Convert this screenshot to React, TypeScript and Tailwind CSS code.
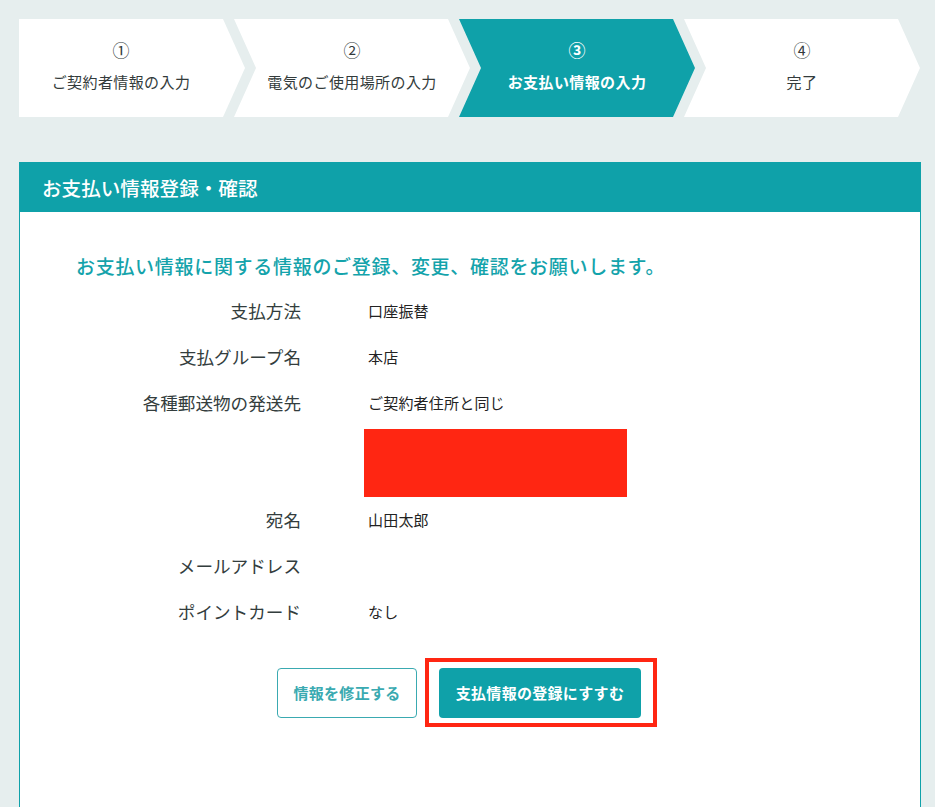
import React from "react";

const steps = [
  { num: "①", label: "ご契約者情報の入力" },
  { num: "②", label: "電気のご使用場所の入力" },
  { num: "③", label: "お支払い情報の入力", active: true },
  { num: "④", label: "完了" },
];

const rows = [
  { label: "支払方法", value: "口座振替" },
  { label: "支払グループ名", value: "本店" },
  { label: "各種郵送物の発送先", value: "ご契約者住所と同じ", redacted: true },
  { label: "宛名", value: "山田太郎" },
  { label: "メールアドレス", value: "" },
  { label: "ポイントカード", value: "なし" },
];

function StepBar() {
  return (
    <div className="flex h-[98px]">
      {steps.map((s, i) => (
        <div
          key={s.num}
          className={
            (i === 0
              ? "w-[226px] pr-[22px] [clip-path:polygon(0_0,calc(100%-22px)_0,100%_50%,calc(100%-22px)_100%,0_100%)]"
              : "-ml-[11px] w-[236px] px-[22px] [clip-path:polygon(0_0,calc(100%-22px)_0,100%_50%,calc(100%-22px)_100%,0_100%,22px_50%)]") +
            (s.active ? " bg-[#0fa1a9] text-white font-bold" : " bg-white text-[#333b3b]") +
            " flex flex-col items-center justify-center pb-[6px]"
          }
        >
          <span className="text-[17px] leading-[24px]">{s.num}</span>
          <span className="mt-[9px] text-[15px] leading-[22px] tracking-[0.4px]">{s.label}</span>
        </div>
      ))}
    </div>
  );
}

export default function App() {
  return (
    <div
      className="min-h-[807px] bg-[#e6eeee] pl-[19px] pr-[14px] pt-[19px]"
      style={{ fontFamily: '"Noto Sans CJK JP", "Noto Sans", sans-serif' }}
    >
      <StepBar />

      {/* panel */}
      <div className="mt-[45px] border border-[#0fa1a9]">
        <div className="flex h-[49px] items-center bg-[#0fa1a9] pl-[22px] text-[19.6px] font-medium text-white">
          お支払い情報登録・確認
        </div>
        <div className="bg-white pb-[100px] pl-[56px] pt-[40px]">
          <h2 className="text-[19px] font-medium leading-[28px] tracking-[0.7px] text-[#14a3ab]">
            お支払い情報に関する情報のご登録、変更、確認をお願いします。
          </h2>

          <div className="mt-[8px] flex flex-col">
            {rows.map((r) => (
              <div key={r.label}>
                <div className="flex h-[46px] items-center">
                  <div className="w-[225px] text-right text-[17.6px] text-[#333d3d]">{r.label}</div>
                  <div className="ml-[67px] text-[15px] tracking-[0.2px] text-[#222]">{r.value}</div>
                </div>
                {r.redacted && (
                  <div className="ml-[288px] mt-[3px] h-[68px] w-[263px] bg-[#ff2612]" />
                )}
              </div>
            ))}
          </div>

          <div className="mt-[33px] flex justify-center gap-[22px] pr-[78px]">
            <button className="h-[50px] w-[140px] rounded-[4px] border border-[#3aaab1] bg-white text-[15px] font-bold tracking-[0.3px] text-[#3aaab1]">
              情報を修正する
            </button>
            <div className="relative">
              <button className="h-[50px] w-[202px] rounded-[4px] bg-[#0fa1a9] text-[15px] font-bold tracking-[0.3px] text-white">
                支払情報の登録にすすむ
              </button>
              {/* annotation frame */}
              <div className="pointer-events-none absolute -bottom-[9px] -left-[14px] -right-[16px] -top-[10px] border-[4px] border-[#ff2612]" />
            </div>
          </div>
        </div>
      </div>
    </div>
  );
}
